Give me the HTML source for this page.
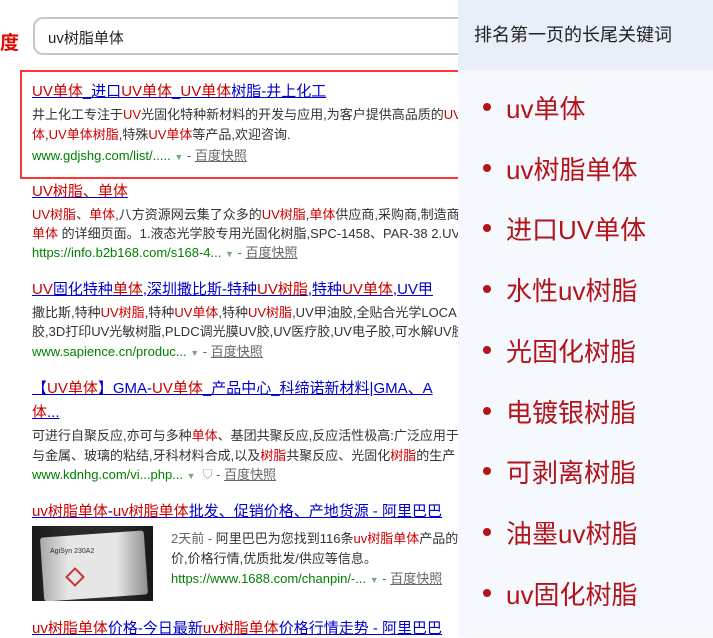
<!DOCTYPE html>
<html><head><meta charset="utf-8"><style>
*{margin:0;padding:0;box-sizing:border-box}
body{width:713px;height:637px;overflow:hidden;background:#fff;font-family:"Liberation Sans","Noto Sans CJK SC",sans-serif;position:relative}
.a{position:absolute;white-space:nowrap}
.t{font-size:15px;color:#00c;text-decoration:underline}
.d{font-size:13px;color:#333}
.u{font-size:13px;color:#008000}
.r{color:#c00}
.k{color:#666;text-decoration:underline}
.ar{color:#7a7;font-size:9px}
#panel{position:absolute;left:458px;top:0;width:255px;height:637px;background:#f5f8fd}
#ph{height:70px;background:#e9eff8;font-size:18px;color:#222;padding:21px 0 0 16px}
.li{position:absolute;left:48px;font-size:26px;color:#b3141c}
.li:before{content:"";position:absolute;left:-23px;top:14px;width:8px;height:8px;border-radius:50%;background:#b3141c}
</style></head><body>
<div class="a" style="left:0;top:28px;font-size:19px;color:#e10601;font-weight:bold">度</div>
<div class="a" style="left:33px;top:17px;width:440px;height:38px;border:2px solid #c4c7ce;border-radius:10px;"></div>
<div class="a" style="left:48px;top:27px;font-size:15px;color:#222">uv树脂单体</div>
<div class="a" style="left:20px;top:70px;width:450px;height:109px;border:2px solid #f33"></div>

<div class="a t" style="left:32px;top:80px"><span class="r">UV单体</span>_进口<span class="r">UV单体</span>_<span class="r">UV单体</span>树脂-井上化工</div>
<div class="a d" style="left:32px;top:104px">井上化工专注于<span class="r">UV</span>光固化特种新材料的开发与应用,为客户提供高品质的<span class="r">UV单</span></div>
<div class="a d" style="left:32px;top:124px"><span class="r">体</span>,<span class="r">UV单体树脂</span>,特殊<span class="r">UV单体</span>等产品,欢迎咨询.</div>
<div class="a u" style="left:32px;top:145px">www.gdjshg.com/list/..... <span class="ar">▼</span> <span style="color:#666">- </span><span class="k">百度快照</span></div>

<div class="a t" style="left:32px;top:180px"><span class="r">UV树脂、单体</span></div>
<div class="a d" style="left:32px;top:204px"><span class="r">UV树脂</span>、<span class="r">单体</span>,八方资源网云集了众多的<span class="r">UV树脂</span>,<span class="r">单体</span>供应商,采购商,制造商。</div>
<div class="a d" style="left:32px;top:223px"><span class="r">单体</span> 的详细页面。1.液态光学胶专用光固化树脂,SPC-1458、PAR-38 2.UV</div>
<div class="a u" style="left:32px;top:242px">https://info.b2b168.com/s168-4... <span class="ar">▼</span> <span style="color:#666">- </span><span class="k">百度快照</span></div>

<div class="a t" style="left:32px;top:278px"><span class="r">UV</span>固化特种<span class="r">单体</span>,深圳撒比斯-特种<span class="r">UV树脂</span>,特种<span class="r">UV单体</span>,UV甲</div>
<div class="a d" style="left:32px;top:302px">撒比斯,特种<span class="r">UV树脂</span>,特种<span class="r">UV单体</span>,特种<span class="r">UV树脂</span>,UV甲油胶,全贴合光学LOCA</div>
<div class="a d" style="left:32px;top:321px">胶,3D打印UV光敏树脂,PLDC调光膜UV胶,UV医疗胶,UV电子胶,可水解UV胶</div>
<div class="a u" style="left:32px;top:341px">www.sapience.cn/produc... <span class="ar">▼</span> <span style="color:#666">- </span><span class="k">百度快照</span></div>

<div class="a t" style="left:32px;top:377px">【<span class="r">UV单体</span>】GMA-<span class="r">UV单体</span>_产品中心_科缔诺新材料|GMA、A</div>
<div class="a t" style="left:32px;top:401px"><span class="r">体</span>...</div>
<div class="a d" style="left:32px;top:425px">可进行自聚反应,亦可与多种<span class="r">单体</span>、基团共聚反应,反应活性极高:广泛应用于</div>
<div class="a d" style="left:32px;top:445px">与金属、玻璃的粘结,牙科材料合成,以及<span class="r">树脂</span>共聚反应、光固化<span class="r">树脂</span>的生产</div>
<div class="a u" style="left:32px;top:464px">www.kdnhg.com/vi...php... <span class="ar">▼</span> <span style="color:#9ab">&nbsp;⛉&nbsp;</span><span style="color:#666">- </span><span class="k">百度快照</span></div>

<div class="a t" style="left:32px;top:500px"><span class="r">uv树脂单体</span>-<span class="r">uv树脂单体</span>批发、促销价格、产地货源 - 阿里巴巴</div>
<div class="a" style="left:32px;top:526px;width:121px;height:75px;background:#2a2a2a;overflow:hidden"><div style="position:absolute;left:10px;top:8px;width:104px;height:64px;background:#e6e6e6;border-radius:3px;transform:rotate(-4deg)"></div><div style="position:absolute;left:18px;top:22px;font-size:7px;color:#333">AgiSyn 230A2</div><div style="position:absolute;left:36px;top:44px;width:14px;height:14px;border:2px solid #c33;transform:rotate(45deg)"></div><div style="position:absolute;left:0;top:0;width:121px;height:75px;background:linear-gradient(90deg,rgba(0,0,0,.35),rgba(0,0,0,0) 30%,rgba(0,0,0,0) 70%,rgba(0,0,0,.45))"></div></div>
<div class="a d" style="left:171px;top:528px"><span style="color:#666">2天前 - </span>阿里巴巴为您找到116条<span class="r">uv树脂单体</span>产品的</div>
<div class="a d" style="left:171px;top:548px">价,价格行情,优质批发/供应等信息。</div>
<div class="a u" style="left:171px;top:568px">https://www.1688.com/chanpin/-... <span class="ar">▼</span> <span style="color:#666">- </span><span class="k">百度快照</span></div>

<div class="a t" style="left:32px;top:617px"><span class="r">uv树脂单体</span>价格-今日最新<span class="r">uv树脂单体</span>价格行情走势 - 阿里巴巴</div>

<div id="panel"><div id="ph">排名第一页的长尾关键词</div>
<div class="li" style="top:89px">uv单体</div>
<div class="li" style="top:150px">uv树脂单体</div>
<div class="li" style="top:210px">进口UV单体</div>
<div class="li" style="top:271px">水性uv树脂</div>
<div class="li" style="top:332px">光固化树脂</div>
<div class="li" style="top:393px">电镀银树脂</div>
<div class="li" style="top:453px">可剥离树脂</div>
<div class="li" style="top:514px">油墨uv树脂</div>
<div class="li" style="top:575px">uv固化树脂</div>
</div>
</body></html>
